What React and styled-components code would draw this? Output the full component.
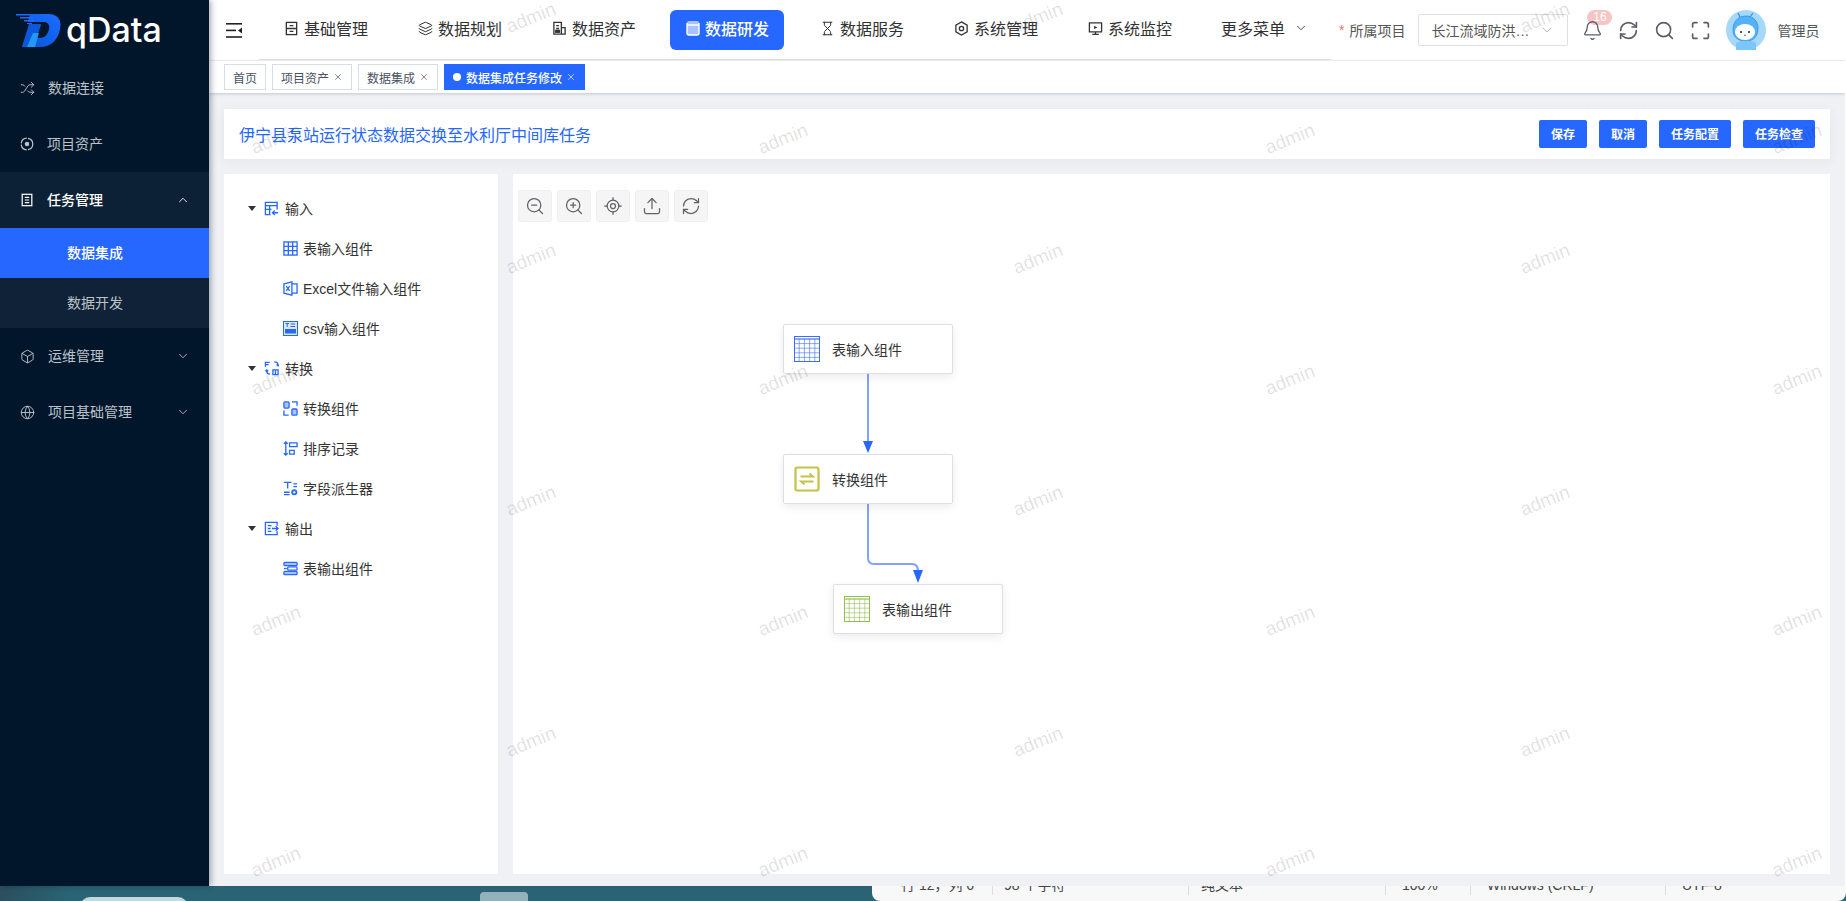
import React from 'react';
import styled, { createGlobalStyle } from 'styled-components';
import {
    Bell, Box, ChevronDown, ChevronUp, Globe, Hourglass, Layers, LocateFixed, Maximize,
    RefreshCw, Search, Shuffle, Upload, X, ZoomIn, ZoomOut,
} from 'lucide-react';

const BLUE = '#2667ff';

const GlobalStyle = createGlobalStyle`
    html, body {
        margin: 0;
        padding: 0;
        height: 100%;
        overflow: hidden;
    }
    body {
        font-family: "Liberation Sans", "Noto Sans CJK SC", sans-serif;
        font-size: 14px;
        color: #303133;
        background: #fff;
    }
`;

const Page = styled.div`
    height: 901px;
    display: flex;
    flex-direction: column;
    overflow: hidden;
`;

const AppRow = styled.div`
    flex: 0 0 886px;
    display: flex;
    background: #fff;
    padding-right: 1px;
`;

const Sidebar = styled.aside`
    flex: 0 0 209px;
    background: #01162b;
    box-shadow: 2px 0 6px rgba(0, 21, 41, 0.35);
    position: relative;
    z-index: 2;
`;

const LogoBox = styled.div`
    height: 60px;
    display: flex;
    align-items: center;
    padding-left: 16px;
    gap: 5px;
    box-sizing: border-box;
`;

const LogoText = styled.span`
    font-family: Inter, sans-serif;
    font-size: 34px;
    font-weight: 500;
    color: #fff;
    line-height: 1;
    margin-top: -1px;
`;

const MenuItem = styled.div`
    height: 56px;
    display: flex;
    align-items: center;
    padding: 0 19px 0 20px;
    gap: 13px;
    font-size: 14px;
    color: ${props => props.$open ? '#fff' : '#bcc2c9'};
    font-weight: ${props => props.$open ? 500 : 400};
    background: ${props => props.$open ? '#0d2136' : 'transparent'};

    span {
        flex: 1;
        padding-bottom: 2px;
    }
`;

const SubItem = styled.div`
    height: 50px;
    box-sizing: border-box;
    padding: 0 0 2px 67px;
    display: flex;
    align-items: center;
    font-size: 14px;
    color: ${props => props.$active ? '#fff' : '#bcc2c9'};
    font-weight: ${props => props.$active ? 500 : 400};
    background: ${props => props.$active ? BLUE : '#0f2237'};
`;

const Main = styled.main`
    flex: 1;
    min-width: 0;
    display: flex;
    flex-direction: column;
    background: #eff1f5;
    position: relative;
    overflow: hidden;
`;

const Header = styled.header`
    flex: 0 0 60px;
    display: flex;
    align-items: center;
    background: #fff;
    padding-left: 17px;
    box-sizing: border-box;
    border-bottom: 1px solid #f1f1f1;
`;

const Nav = styled.nav`
    width: 1072px;
    height: 60px;
    box-sizing: border-box;
    margin-left: 17px;
    padding-left: 9px;
    display: flex;
    align-items: center;
    gap: 20px;
    border-bottom: 1px solid #dcdfe6;
`;

const NavItem = styled.div`
    flex: 0 0 114px;
    height: 40px;
    box-sizing: border-box;
    display: flex;
    align-items: center;
    padding: 0 0 3px ${props => props.$more ? '15px' : '16px'};
    gap: ${props => props.$more ? '9px' : '5px'};
    border-radius: 6px;
    font-size: 16px;
    color: ${props => props.$active ? '#fff' : '#303133'};
    font-weight: ${props => props.$active ? 500 : 400};
    background: ${props => props.$active ? BLUE : 'transparent'};

    svg {
        flex: none;
    }
`;

const Required = styled.span`
    margin-left: 8px;
    color: #f56c6c;
    font-size: 14px;
    margin-right: 5px;
`;

const ProjectLabel = styled.span`
    font-size: 14px;
    color: #555;
`;

const ProjectSelect = styled.div`
    width: 150px;
    height: 32px;
    box-sizing: border-box;
    margin-left: 13px;
    padding: 0 12px 0 12px;
    border: 1px solid #dcdfe6;
    border-radius: 2px;
    display: flex;
    align-items: center;
    justify-content: space-between;
    font-size: 14px;
    color: #555;
`;

const ToolIcons = styled.div`
    margin-left: 14px;
    display: flex;
    align-items: center;
    gap: 15px;
    color: #5a5e66;
`;

const BellBox = styled.div`
    width: 21px;
    height: 21px;
    position: relative;
`;

const Badge = styled.span`
    position: absolute;
    top: -10px;
    left: 5px;
    width: 25px;
    height: 15px;
    border-radius: 8px;
    background: #f7c5c5;
    color: #fff;
    font-size: 12px;
    font-weight: 500;
    line-height: 15px;
    text-align: center;
`;

const BellIcon = styled(Bell)`
    position: relative;
    display: block;
`;

const UserBox = styled.div`
    margin-left: 15px;
    display: flex;
    align-items: center;
    gap: 11px;
    font-size: 14px;
    color: #555;
`;

const TabBar = styled.div`
    flex: 0 0 32px;
    box-sizing: border-box;
    padding: 3px 0 0 15px;
    display: flex;
    align-items: flex-start;
    gap: 6px;
    background: #fff;
    box-shadow: 0 1px 3px rgba(0, 21, 41, 0.18);
    position: relative;
`;

const Tab = styled.div`
    height: 26px;
    box-sizing: border-box;
    padding: 0 8px;
    display: flex;
    align-items: center;
    font-size: 12px;
    color: ${props => props.$active ? '#fff' : '#495060'};
    font-weight: ${props => props.$active ? 500 : 400};
    background: ${props => props.$active ? BLUE : '#fff'};
    border: 1px solid ${props => props.$active ? BLUE : '#d8dce5'};

    svg {
        margin-left: 4px;
    }
`;

const TabDot = styled.i`
    width: 8px;
    height: 8px;
    border-radius: 50%;
    background: #fff;
    margin-right: 5px;
`;

const Content = styled.div`
    flex: 1;
    min-height: 0;
    padding: 16px 15px 12px;
    display: flex;
    flex-direction: column;
    gap: 15px;
`;

const TitleCard = styled.div`
    flex: 0 0 50px;
    box-sizing: border-box;
    display: flex;
    align-items: center;
    justify-content: space-between;
    padding: 0 15px 1px;
    background: #fff;
    box-shadow: 0 2px 12px rgba(0, 0, 0, 0.05);
`;

const TaskTitle = styled.h1`
    margin: 0;
    font-size: 16px;
    font-weight: 400;
    color: ${BLUE};
`;

const ButtonRow = styled.div`
    display: flex;
    gap: 12px;
`;

const ActionButton = styled.button`
    height: 28px;
    padding: 0 12px 1px;
    border: none;
    border-radius: 2px;
    background: ${BLUE};
    color: #fff;
    font-family: inherit;
    font-size: 12px;
    font-weight: 700;
`;

const Panels = styled.div`
    flex: 1;
    min-height: 0;
    display: flex;
    gap: 15px;
`;

const TreePanel = styled.div`
    flex: 0 0 274px;
    background: #fff;
    padding-top: 14px;
    box-sizing: border-box;
`;

const TreeRow = styled.div`
    height: 40px;
    display: flex;
    align-items: center;
    padding-left: ${props => props.$child ? '59px' : '24px'};
    gap: ${props => props.$child ? '5px' : '6px'};
    font-size: 14px;
    color: #333;
`;

const Caret = styled.i`
    width: 0;
    height: 0;
    border-left: 4px solid transparent;
    border-right: 4px solid transparent;
    border-top: 5px solid #333;
    margin-right: 2px;
`;

const CanvasPanel = styled.div`
    flex: 1;
    min-width: 0;
    background: #fff;
    position: relative;
`;

const Toolbar = styled.div`
    display: flex;
    gap: 5px;
    padding: 16px 0 0 5px;
`;

const ToolButton = styled.div`
    width: 34px;
    height: 32px;
    box-sizing: border-box;
    display: flex;
    align-items: center;
    justify-content: center;
    background: #f5f5f5;
    border: 1px solid #efefef;
    border-radius: 3px;
    color: #606266;
`;

const FlowNode = styled.div`
    position: absolute;
    left: ${props => props.$x}px;
    top: ${props => props.$y}px;
    width: 170px;
    height: 50px;
    box-sizing: border-box;
    display: flex;
    align-items: center;
    gap: 12px;
    padding: 0 0 1px 10px;
    background: #fff;
    border: 1px solid #dcdfe6;
    border-radius: 2px;
    box-shadow: 0 3px 10px rgba(0, 0, 0, 0.08);
    font-size: 14px;
    color: #333;
`;

const Edges = styled.svg`
    position: absolute;
    inset: 0;
    width: 100%;
    height: 100%;
    pointer-events: none;
`;

const WatermarkLayer = styled.div`
    position: absolute;
    top: -42px;
    left: 0;
    width: 100%;
    pointer-events: none;
    z-index: 5;
`;

const WatermarkRow = styled.div`
    height: 120.6px;
    display: flex;
    align-items: center;
    gap: 447px;
    padding-left: ${props => props.$odd ? '37px' : '292px'};
`;

const Watermark = styled.span`
    flex: 0 0 60px;
    text-align: center;
    font-size: 19px;
    color: rgba(0, 0, 0, 0.12);
    transform: rotate(-22deg);
`;

const BottomStrip = styled.div`
    flex: 0 0 15px;
    display: flex;
    background: #2a6474;
    overflow: hidden;
`;

const Desktop = styled.div`
    flex: 0 0 872px;
    display: flex;
    align-items: flex-start;
    background: linear-gradient(90deg, #2b4f5e 0, #2a6474 70px);
`;

const DockPill = styled.i`
    width: 108px;
    height: 10px;
    margin: 11px 0 0 80px;
    border-radius: 14px 14px 0 0;
    background: #c3d8dc;
`;

const DockTile = styled.i`
    width: 48px;
    height: 15px;
    margin: 6px 0 0 292px;
    border-radius: 4px 4px 0 0;
    background: #93b2ba;
`;

const StatusBar = styled.div`
    flex: 1;
    display: grid;
    grid-template-columns: 120px 196px 197px 85px 195px 1fr;
    background: #f8f8f8;
    border-radius: 0 0 8px 8px;
`;

const StatusCell = styled.div`
    margin-top: -11px;
    height: 20px;
    padding-left: ${props => props.$pad || 16}px;
    font-size: 14px;
    line-height: 20px;
    color: #444;
    white-space: nowrap;
    border-left: ${props => props.$first ? 'none' : '1px solid #ddd'};
`;

const Ico = ({ size = 14, view = 16, color = BLUE, children }) => (
    <svg width={size} height={size} viewBox={`0 0 ${view} ${view}`} fill="none" stroke={color} strokeWidth="1.4">
        {children}
    </svg>
);

const LogoMark = () => (
    <svg width="45" height="35" viewBox="0 0 45 35">
        <defs>
            <linearGradient id="logoBlue" x1="0" y1="1" x2="1" y2="0">
                <stop offset="0" stopColor="#0b52cc" />
                <stop offset="0.5" stopColor="#0f62ee" />
                <stop offset="1" stopColor="#1d6cff" />
            </linearGradient>
        </defs>
        <path d="M14 1 H32 C42 1 46 7 44 16 C42 27 35 34 24 34 H6 L14 12 H25 L20 25 H24 C29 25 32 21 33 16 C34 12 32 9 27 9 H12 Z" fill="url(#logoBlue)" />
        <path d="M13 11 H25 L17 34 H6 Z" fill="#0c58dc" />
        <path d="M17 20 H23 L19 34 H11 Z" fill="#25a5ff" opacity="0.85" />
        <path d="M0 1 H14 V2.5 H0 Z M4 4 H17 V5.5 H4 Z M8 7 H18 V8.5 H8 Z M11 10 H16 V11 H11 Z" fill="#1f6bff" />
    </svg>
);

const Hamburger = () => (
    <svg width="16" height="15" viewBox="0 0 16 15" fill="#222">
        <rect x="0" y="0" width="16" height="1.6" />
        <rect x="0" y="6.6" width="10" height="1.6" />
        <rect x="0" y="13.2" width="16" height="1.6" />
        <path d="M16 4.5 V10.5 L12 7.5 Z" />
    </svg>
);

const BaseIcon = () => (
    <Ico color="#333" size={15}>
        <rect x="2.5" y="1.5" width="11" height="13" />
        <path d="M2.5 8 H13.5 M6 5 H10 M6 11 H10" />
    </Ico>
);

const AssetIcon = () => (
    <Ico color="#333" size={15}>
        <path d="M2 1.5 H10 V14 H2 Z M10 7 H14 V14 H10 M4.5 5 H7.5 M4.5 8 H7.5" />
        <rect x="4" y="10" width="4" height="2" fill="#333" />
    </Ico>
);

const DevIcon = () => (
    <svg width="14" height="16" viewBox="0 0 14 16">
        <rect x="1" y="1" width="12" height="14" rx="2" fill="#a9c3ff" />
        <path d="M1 5 H13 M1 3 V13 A2 2 0 0 0 3 15 H11 A2 2 0 0 0 13 13 V3" fill="none" stroke="#fff" strokeWidth="1.4" />
    </svg>
);

const HexIcon = () => (
    <Ico color="#333" size={15}>
        <path d="M8 1 L14 4.5 V11.5 L8 15 L2 11.5 V4.5 Z" />
        <circle cx="8" cy="8" r="2.3" />
    </Ico>
);

const MonitorIcon = () => (
    <Ico color="#333" size={15}>
        <path d="M1.5 2 H14.5 V11.5 H1.5 Z M8 11.5 V14 M4.5 14.2 H11.5" />
        <path d="M6.5 5 L10 6.8 L6.5 8.6 Z" fill="#333" stroke="none" />
    </Ico>
);

const AssetRingIcon = () => (
    <Ico color="#bcc2c9">
        <circle cx="8" cy="8" r="6.6" strokeDasharray="9 1.5" />
        <circle cx="8" cy="8" r="2.6" fill="#bcc2c9" stroke="none" />
    </Ico>
);

const TaskIcon = () => (
    <Ico color="#fff">
        <rect x="2.5" y="1.5" width="11" height="13" />
        <path d="M5.5 5 H10.5 M5.5 8 H10.5 M5.5 11 H10.5" />
    </Ico>
);

const InputIcon = () => (
    <Ico size={15}>
        <path d="M14 9 V1.5 H1.5 V14.5 H7 M1.5 5 H14 M1.5 9 H8 M6 5 V14.5" />
        <path d="M15 12.5 H9 M11.5 10 L9 12.5 L11.5 15" />
    </Ico>
);

const TableIcon = () => (
    <Ico size={15}>
        <rect x="1" y="1" width="14" height="14" />
        <path d="M1 5.7 H15 M1 10.3 H15 M5.7 1 V15 M10.3 1 V15" />
    </Ico>
);

const ExcelIcon = () => (
    <Ico size={15}>
        <path d="M1 3 L9.5 1 V15 L1 13 Z M9.5 3 H15 V13 H9.5" />
        <path d="M3.5 5.5 L7 10.5 M7 5.5 L3.5 10.5" />
    </Ico>
);

const CsvIcon = () => (
    <svg width="15" height="15" viewBox="0 0 15 15">
        <rect x="0" y="0" width="15" height="15" fill={BLUE} />
        <rect x="1" y="1" width="13" height="13" fill="#dbe6ff" />
        <path d="M2.5 2.5 H6 M4.2 2.5 V6 M7.5 3 H12 M7.5 5.5 H12" stroke={BLUE} strokeWidth="1" />
        <rect x="2" y="8" width="11" height="4.5" fill={BLUE} />
    </svg>
);

const SwapGroupIcon = () => (
    <Ico size={15}>
        <path d="M1.5 6 V1.5 H6 M1.5 3.8 H5 M11 1 C13.5 1 15 2.5 15 5 M13.5 3.8 L15 5.3 L16 3.8 M9.5 9.5 H15 V14.5 H9.5 Z M12.2 9.5 V14.5 M3 9.5 V11.5 C3 13.5 4 14 6.5 14 M1.5 11 L3 9.5 L4.5 11" />
    </Ico>
);

const ConvertIcon = () => (
    <Ico size={15}>
        <rect x="1" y="1" width="5.5" height="6.5" rx="1" fill="#a9c3ff" />
        <rect x="9.5" y="8.5" width="5.5" height="6.5" rx="1" fill="#a9c3ff" />
        <path d="M9.5 1 H15 V5 M1 10 V15 H6" />
    </Ico>
);

const SortIcon = () => (
    <Ico size={15}>
        <path d="M3 1 V15 M1 3 L3 1 L5 3 M1 13 L3 15 L5 13" />
        <path d="M7 2 H15 V6 H7 Z M7 10 H12 V14 H7 Z" />
    </Ico>
);

const FieldIcon = () => (
    <Ico size={15}>
        <path d="M1 1.5 H9 M5 1.5 V8 M1 12 H7 M1 14.5 H7 M11 3 H15 M11 6 H15" />
        <circle cx="12" cy="12" r="3.2" fill={BLUE} stroke="none" />
        <path d="M10.5 12 H13.5 M12 10.5 V13.5" stroke="#fff" strokeWidth="1" />
    </Ico>
);

const OutputIcon = () => (
    <Ico size={15}>
        <path d="M14 5 V1.5 H1.5 V14.5 H14 V11 M4 5 H8 M4 8 H7 M4 11 H8" />
        <path d="M8.5 8 H15 M12.5 5.5 L15 8 L12.5 10.5" />
    </Ico>
);

const OutputTableIcon = () => (
    <Ico size={15}>
        <rect x="1" y="1.5" width="14" height="3.5" rx="1" fill="#a9c3ff" />
        <rect x="5" y="6.2" width="10" height="3.5" rx="1" />
        <rect x="1" y="11" width="14" height="3.5" rx="1" fill="#a9c3ff" />
        <path d="M1 8 H4" />
    </Ico>
);

const GridIcon = ({ color }) => {
    const lines = [1, 2, 3, 4];
    return (
        <svg width="26" height="26" viewBox="0 0 26 26" fill="none" stroke={color} strokeWidth="0.6">
            <rect x="0.5" y="0.5" width="25" height="25" strokeWidth="1" />
            <path d="M0 3 H26" strokeWidth="1.2" />
            {lines.map(i => <path key={i} d={`M${i * 5.2} 3 V26 M0 ${3 + i * 4.6} H26`} />)}
        </svg>
    );
};

const SwapNodeIcon = () => (
    <svg width="26" height="26" viewBox="0 0 26 26" fill="none" stroke="#c5c244" strokeWidth="1.8">
        <rect x="1.5" y="1.5" width="23" height="23" rx="2" strokeWidth="2.2" />
        <path d="M6.5 10.5 H19 L15.5 7.5 M19.5 15.5 H7 L10.5 18.5" />
    </svg>
);

const Avatar = () => (
    <svg width="40" height="40" viewBox="0 0 40 40">
        <circle cx="20" cy="20" r="20" fill="#a5d8fb" />
        <path d="M14 7 L12 3 M24 7 L27 3" stroke="#2f8fe8" strokeWidth="1.2" />
        <path d="M20 6 C11 6 7 13 7 20 C7 28 13 31 20 31 C28 31 32 26 32 18 C32 11 27 6 20 6 Z" fill="#54b3f7" stroke="#2f8fe8" strokeWidth="0.8" />
        <ellipse cx="19" cy="22" rx="10" ry="8" fill="#fff" />
        <circle cx="15" cy="22" r="1.1" fill="#234" />
        <circle cx="23" cy="22" r="1.1" fill="#234" />
        <path d="M18 25 Q19 26 20 25" stroke="#234" strokeWidth="0.7" fill="none" />
        <path d="M10 40 V33 C16 30 26 30 30 33 V40 Z" fill="#7cc6fa" />
    </svg>
);

const navItems = [
    { label: '基础管理', icon: <BaseIcon /> },
    { label: '数据规划', icon: <Layers size={15} strokeWidth={1.6} /> },
    { label: '数据资产', icon: <AssetIcon /> },
    { label: '数据研发', icon: <DevIcon />, active: true },
    { label: '数据服务', icon: <Hourglass size={15} strokeWidth={1.6} /> },
    { label: '系统管理', icon: <HexIcon /> },
    { label: '系统监控', icon: <MonitorIcon /> },
];

const treeRows = [
    { label: '输入', icon: <InputIcon /> },
    { label: '表输入组件', icon: <TableIcon />, child: true },
    { label: 'Excel文件输入组件', icon: <ExcelIcon />, child: true },
    { label: 'csv输入组件', icon: <CsvIcon />, child: true },
    { label: '转换', icon: <SwapGroupIcon /> },
    { label: '转换组件', icon: <ConvertIcon />, child: true },
    { label: '排序记录', icon: <SortIcon />, child: true },
    { label: '字段派生器', icon: <FieldIcon />, child: true },
    { label: '输出', icon: <OutputIcon /> },
    { label: '表输出组件', icon: <OutputTableIcon />, child: true },
];

const watermarkRows = [0, 1, 2, 3, 4, 5, 6, 7];

const App = () => (
    <Page>
        <GlobalStyle />
        <AppRow>
            <Sidebar>
                <LogoBox>
                    <LogoMark />
                    <LogoText>qData</LogoText>
                </LogoBox>
                <MenuItem><Shuffle size={15} strokeWidth={1.5} /><span>数据连接</span></MenuItem>
                <MenuItem><AssetRingIcon /><span>项目资产</span></MenuItem>
                <MenuItem $open><TaskIcon /><span>任务管理</span><ChevronUp size={14} strokeWidth={1.5} /></MenuItem>
                <SubItem $active>数据集成</SubItem>
                <SubItem>数据开发</SubItem>
                <MenuItem><Box size={15} strokeWidth={1.5} /><span>运维管理</span><ChevronDown size={14} strokeWidth={1.5} /></MenuItem>
                <MenuItem><Globe size={15} strokeWidth={1.5} /><span>项目基础管理</span><ChevronDown size={14} strokeWidth={1.5} /></MenuItem>
            </Sidebar>
            <Main>
                <Header>
                    <Hamburger />
                    <Nav>
                        {navItems.map(item => (
                            <NavItem key={item.label} $active={item.active}>
                                {item.icon}
                                {item.label}
                            </NavItem>
                        ))}
                        <NavItem $more>更多菜单<ChevronDown size={14} strokeWidth={1.5} /></NavItem>
                    </Nav>
                    <Required>*</Required>
                    <ProjectLabel>所属项目</ProjectLabel>
                    <ProjectSelect>长江流域防洪…<ChevronDown size={16} color="#b5b8bf" strokeWidth={1.5} /></ProjectSelect>
                    <ToolIcons>
                        <BellBox>
                            <Badge>16</Badge>
                            <BellIcon size={21} strokeWidth={1.5} />
                        </BellBox>
                        <RefreshCw size={21} strokeWidth={1.9} />
                        <Search size={21} strokeWidth={1.8} />
                        <Maximize size={21} strokeWidth={1.9} />
                    </ToolIcons>
                    <UserBox>
                        <Avatar />
                        管理员
                    </UserBox>
                </Header>
                <TabBar>
                    <Tab>首页</Tab>
                    <Tab>项目资产<X size={10} strokeWidth={1.6} /></Tab>
                    <Tab>数据集成<X size={10} strokeWidth={1.6} /></Tab>
                    <Tab $active><TabDot />数据集成任务修改<X size={10} strokeWidth={1.6} /></Tab>
                </TabBar>
                <Content>
                    <TitleCard>
                        <TaskTitle>伊宁县泵站运行状态数据交换至水利厅中间库任务</TaskTitle>
                        <ButtonRow>
                            <ActionButton>保存</ActionButton>
                            <ActionButton>取消</ActionButton>
                            <ActionButton>任务配置</ActionButton>
                            <ActionButton>任务检查</ActionButton>
                        </ButtonRow>
                    </TitleCard>
                    <Panels>
                        <TreePanel>
                            {treeRows.map(row => (
                                <TreeRow key={row.label} $child={row.child}>
                                    {!row.child && <Caret />}
                                    {row.icon}
                                    {row.label}
                                </TreeRow>
                            ))}
                        </TreePanel>
                        <CanvasPanel>
                            <Toolbar>
                                <ToolButton><ZoomOut size={20} strokeWidth={1.5} /></ToolButton>
                                <ToolButton><ZoomIn size={20} strokeWidth={1.5} /></ToolButton>
                                <ToolButton><LocateFixed size={20} strokeWidth={1.5} /></ToolButton>
                                <ToolButton><Upload size={20} strokeWidth={1.5} /></ToolButton>
                                <ToolButton><RefreshCw size={20} strokeWidth={1.5} /></ToolButton>
                            </Toolbar>
                            <Edges>
                                <path d="M355 199 V268" stroke="#7fa3ff" strokeWidth="2" fill="none" />
                                <path d="M350 267 H360 L355 279 Z" fill={BLUE} />
                                <path d="M355 329 V384 Q355 390 361 390 H399 Q405 390 405 397" stroke="#7fa3ff" strokeWidth="2" fill="none" />
                                <path d="M400 396 H410 L405 409 Z" fill={BLUE} />
                            </Edges>
                            <FlowNode $x={270} $y={150}><GridIcon color="#3a6cff" />表输入组件</FlowNode>
                            <FlowNode $x={270} $y={280}><SwapNodeIcon />转换组件</FlowNode>
                            <FlowNode $x={320} $y={410}><GridIcon color="#8fbf4f" />表输出组件</FlowNode>
                        </CanvasPanel>
                    </Panels>
                </Content>
                <WatermarkLayer>
                    {watermarkRows.map(row => (
                        <WatermarkRow key={row} $odd={row % 2 === 1}>
                            <Watermark>admin</Watermark>
                            <Watermark>admin</Watermark>
                            <Watermark>admin</Watermark>
                            {row % 2 === 1 && <Watermark>admin</Watermark>}
                        </WatermarkRow>
                    ))}
                </WatermarkLayer>
            </Main>
        </AppRow>
        <BottomStrip>
            <Desktop>
                <DockPill />
                <DockTile />
            </Desktop>
            <StatusBar>
                <StatusCell $first $pad={29}>行 12，列 6</StatusCell>
                <StatusCell $pad={11}>98 个字符</StatusCell>
                <StatusCell $pad={12}>纯文本</StatusCell>
                <StatusCell>100%</StatusCell>
                <StatusCell>Windows (CRLF)</StatusCell>
                <StatusCell>UTF-8</StatusCell>
            </StatusBar>
        </BottomStrip>
    </Page>
);

export default App;
